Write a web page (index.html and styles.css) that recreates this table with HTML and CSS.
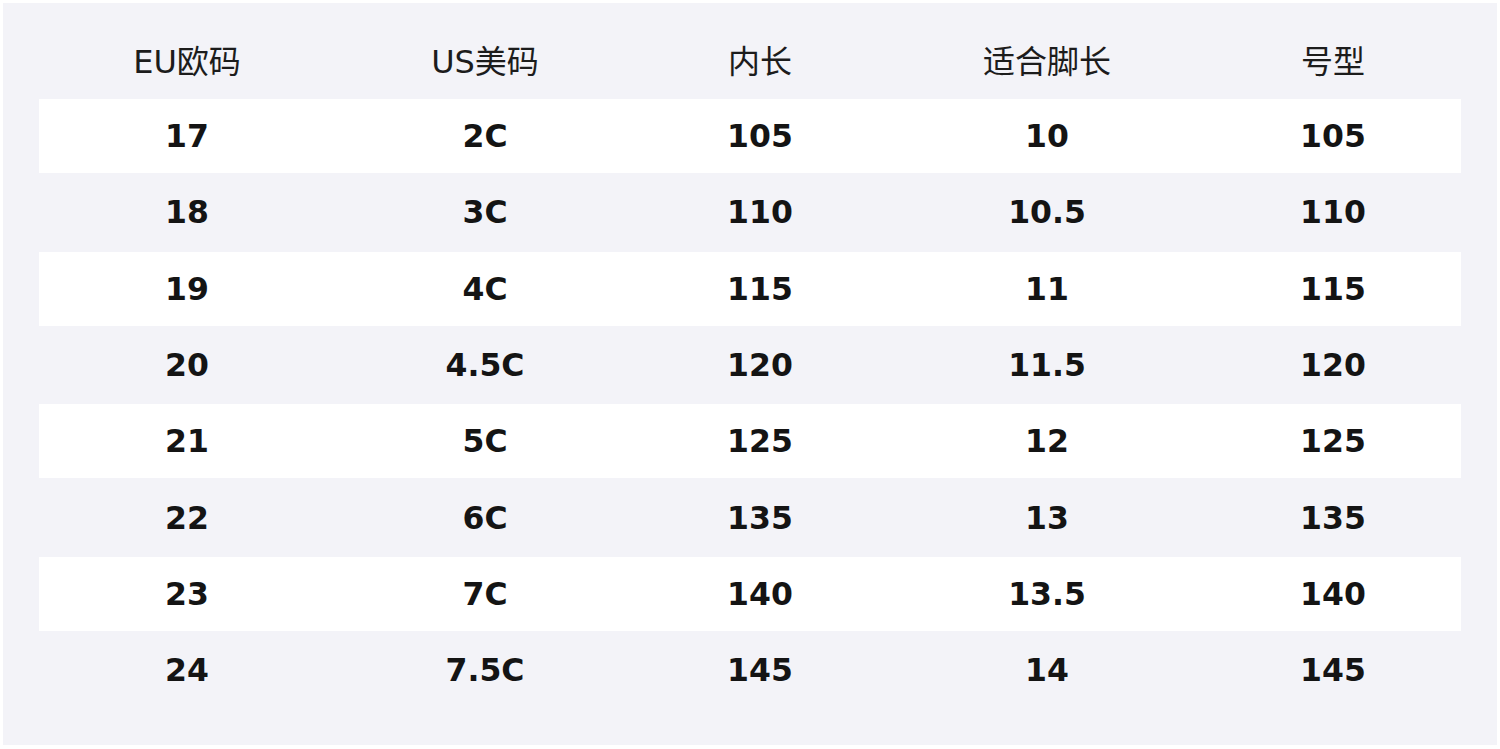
FILE: index.html
```html
<!DOCTYPE html>
<html lang="zh">
<head>
<meta charset="utf-8">
<title>尺码表</title>
<link rel="stylesheet" href="styles.css">
</head>
<body>
<div class="panel">
  <div class="row head">
    <div class="cell">EU欧码</div>
    <div class="cell">US美码</div>
    <div class="cell">内长</div>
    <div class="cell">适合脚长</div>
    <div class="cell">号型</div>
  </div>
  <div class="row odd"><div class="cell">17</div><div class="cell">2C</div><div class="cell">105</div><div class="cell">10</div><div class="cell">105</div></div>
  <div class="row even"><div class="cell">18</div><div class="cell">3C</div><div class="cell">110</div><div class="cell">10.5</div><div class="cell">110</div></div>
  <div class="row odd"><div class="cell">19</div><div class="cell">4C</div><div class="cell">115</div><div class="cell">11</div><div class="cell">115</div></div>
  <div class="row even"><div class="cell">20</div><div class="cell">4.5C</div><div class="cell">120</div><div class="cell">11.5</div><div class="cell">120</div></div>
  <div class="row odd"><div class="cell">21</div><div class="cell">5C</div><div class="cell">125</div><div class="cell">12</div><div class="cell">125</div></div>
  <div class="row even"><div class="cell">22</div><div class="cell">6C</div><div class="cell">135</div><div class="cell">13</div><div class="cell">135</div></div>
  <div class="row odd"><div class="cell">23</div><div class="cell">7C</div><div class="cell">140</div><div class="cell">13.5</div><div class="cell">140</div></div>
  <div class="row even"><div class="cell">24</div><div class="cell">7.5C</div><div class="cell">145</div><div class="cell">14</div><div class="cell">145</div></div>
</div>
</body>
</html>
```
FILE: styles.css
```css
html, body {
  margin: 0;
  padding: 0;
  background: #ffffff;
}
body {
  font-family: "DejaVu Sans", "Noto Sans CJK SC", sans-serif;
  color: #141414;
}
.panel {
  margin: 3px;
  width: 1422px;
  height: 742px;
  padding: 0 36px;
  background: #f3f3f8;
}
.row {
  display: grid;
  grid-template-columns: 296px 300px 250px 324px 248px;
  align-items: center;
  text-align: center;
}
.head {
  height: 81px;
  padding-top: 15px;
  font-size: 32px;
  font-weight: normal;
  color: #1c1c1c;
}
.odd {
  height: 74px;
  background: #ffffff;
  font-size: 31.5px;
  font-weight: bold;
}
.even {
  height: 78.7px;
  font-size: 31.5px;
  font-weight: bold;
}
```
